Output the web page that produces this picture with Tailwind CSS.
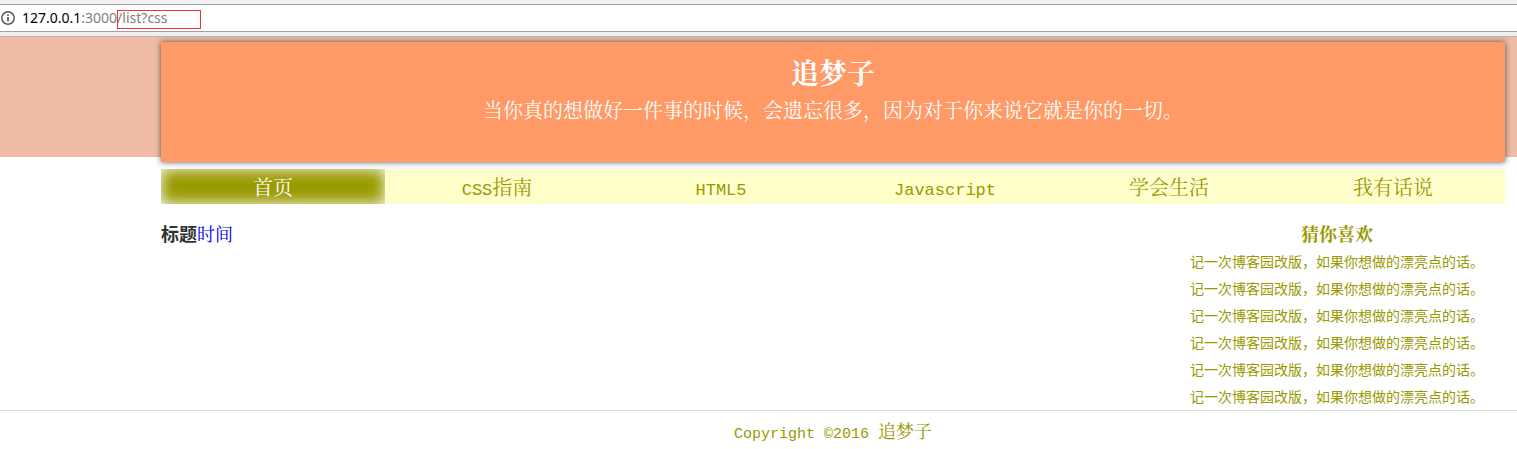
<!DOCTYPE html>
<html lang="zh-CN">
<head>
    <meta charset="UTF-8">
    <meta name="viewport" content="width=device-width, initial-scale=1.0">
    <title>追梦子</title>
    <script src="https://cdn.jsdelivr.net/npm/@tailwindcss/browser@4"></script>
</head>
<body class="bg-white text-[18px] text-[#999900] font-['Noto_Serif_CJK_SC','Noto_Sans_CJK_SC',serif]">
    <!-- 地址栏 -->
    <div class="bg-[#f0f0f0] border-b border-[#b4b4b4] pt-1 pb-1">
        <div class="flex items-center h-7 bg-white border-y border-[#a0a0a0] font-['Noto_Sans',sans-serif] text-[14px] leading-4 text-[#808080]">
            <svg class="w-4 h-4 mr-1.5" viewBox="0 0 16 16" fill="none" stroke="#5a5a5a">
                <circle cx="8" cy="8" r="6.2" stroke-width="1.5"/>
                <path d="M8 7v4.5M8 4.4v1.7" stroke-width="1.7"/>
            </svg>
            <span class="text-black">127.0.0.1</span><span>:3000</span>
            <span class="relative">/list?css<span class="absolute left-0 top-0 w-[84px] h-[19px] border border-[#f23030]"></span></span>
        </div>
    </div>

    <header class="h-[120px] bg-[#f0bca5] pt-[5px] pl-[161px] pr-3">
        <div class="h-[120px] pt-3 bg-[#ff9966] text-white text-center shadow-[0_0_6px_#555]">
            <h1 class="text-[28px] leading-9 font-bold">追梦子</h1>
            <p class="text-[20px] leading-10">当你真的想做好一件事的时候，会遗忘很多，因为对于你来说它就是你的一切。</p>
        </div>
    </header>

    <nav class="grid grid-cols-6 mt-3 ml-[161px] mr-3 bg-[#ffffcc] text-[20px] leading-[35px] text-center">
        <a href="#" class="bg-[#999900] text-white shadow-[inset_0_0_15px_#fff]">首页</a>
        <a href="#"><span class="font-['Liberation_Mono',monospace] text-[17px] leading-none">CSS</span>指南</a>
        <a href="#"><span class="font-['Liberation_Mono',monospace] text-[17px] leading-none">HTML5</span></a>
        <a href="#"><span class="font-['Liberation_Mono',monospace] text-[17px] leading-none">Javascript</span></a>
        <a href="#">学会生活</a>
        <a href="#">我有话说</a>
    </nav>

    <div class="flex mt-4 ml-[161px] mr-3">
        <main class="flex-1 flex leading-[26px]">
            <h2 class="font-bold text-[#333] font-['Noto_Sans_CJK_SC',sans-serif]">标题</h2>
            <a href="#" class="text-[#0000ee]">时间</a>
        </main>
        <aside class="w-1/4 text-center">
            <h2 class="mb-0.5 font-bold leading-[26px]">猜你喜欢</h2>
            <ul class="text-[14px] leading-[27px] whitespace-nowrap font-['Noto_Sans_CJK_SC',sans-serif]">
                <li><a href="#">记一次博客园改版，如果你想做的漂亮点的话。</a></li>
                <li><a href="#">记一次博客园改版，如果你想做的漂亮点的话。</a></li>
                <li><a href="#">记一次博客园改版，如果你想做的漂亮点的话。</a></li>
                <li><a href="#">记一次博客园改版，如果你想做的漂亮点的话。</a></li>
                <li><a href="#">记一次博客园改版，如果你想做的漂亮点的话。</a></li>
                <li><a href="#">记一次博客园改版，如果你想做的漂亮点的话。</a></li>
            </ul>
        </aside>
    </div>

    <footer class="border-t border-[#ddd] pl-[161px] pr-3 text-center leading-[38px]">
        <span class="font-['Liberation_Mono',monospace] text-[15px] leading-none">Copyright ©2016 </span>追梦子
    </footer>
</body>
</html>
